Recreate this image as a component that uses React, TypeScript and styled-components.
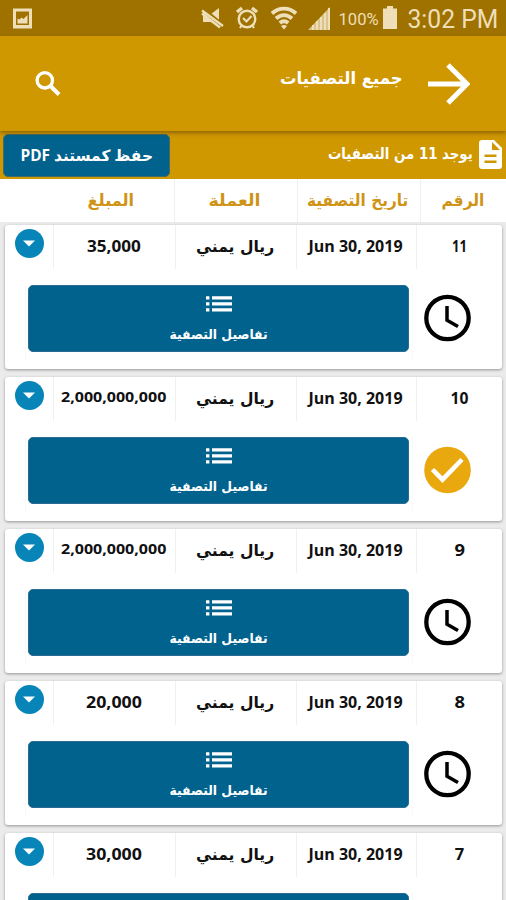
import React, { useLayoutEffect, useRef, useState } from "react";
import styled, { createGlobalStyle } from "styled-components";

const GlobalStyle = createGlobalStyle`
  html, body { margin: 0; padding: 0; background: #ebebeb; }
  body { overflow: hidden; }
  * { box-sizing: border-box; }
`;

const Screen = styled.div`
  width: 506px;
  height: 900px;
  overflow: hidden;
  background: #ebebeb;
  font-family: "Open Sans", "DejaVu Sans", sans-serif;
  display: flex;
  flex-direction: column;
`;

const FitBox = styled.span<{ $w: number; $dy: number }>`
  display: flex;
  justify-content: center;
  flex: none;
  width: ${(p) => p.$w}px;
  transform: translateY(${(p) => p.$dy}px);
`;

const FitText = styled.span<{ $size: number; $color: string; $weight: number; $family?: string }>`
  flex: none;
  white-space: nowrap;
  line-height: 1.2;
  font-size: ${(p) => p.$size}px;
  font-weight: ${(p) => p.$weight};
  color: ${(p) => p.$color};
  ${(p) => (p.$family ? `font-family: ${p.$family};` : "")}
`;

type LabelProps = {
  text: string;
  width: number;
  size: number;
  color?: string;
  weight?: number;
  family?: string;
  dy?: number;
  rtl?: boolean;
};

const ARABIC = '"DejaVu Sans", sans-serif';

/* One line of text condensed or widened to a fixed measure. */
function Label({ text, width, size, color = "#111", weight = 700, family, dy = 0, rtl }: LabelProps) {
  const ref = useRef<HTMLSpanElement>(null);
  const [scale, setScale] = useState(1);
  useLayoutEffect(() => {
    if (ref.current) setScale(width / ref.current.offsetWidth);
  }, [width, text]);
  return (
    <FitBox $w={width} $dy={dy}>
      <FitText
        ref={ref}
        dir={rtl ? "rtl" : "ltr"}
        $size={size}
        $color={color}
        $weight={weight}
        $family={family ?? (rtl ? ARABIC : undefined)}
        style={{ transform: `scaleX(${scale})` }}
      >
        {text}
      </FitText>
    </FitBox>
  );
}

const StatusBar = styled.div`
  height: 36px;
  flex: none;
  background: #9f7200;
  display: flex;
  align-items: center;
  padding: 0 8px 0 12px;
`;
const Spacer = styled.div`
  flex: 1;
`;
const Glyph = styled.svg<{ $ml?: number; $dy?: number }>`
  display: block;
  flex: none;
  margin-left: ${(p) => p.$ml ?? 0}px;
  margin-top: ${(p) => p.$dy ?? 0}px;
`;
const Gap = styled.span<{ $w: number }>`
  flex: none;
  width: ${(p) => p.$w}px;
`;

const AppBar = styled.header`
  height: 95px;
  flex: none;
  background: #cf9700;
  display: flex;
  align-items: center;
  padding: 0 36px 0 34px;
  box-shadow: 0 2px 4px rgba(90, 60, 0, 0.55);
  z-index: 1;
`;

const SummaryBar = styled.div`
  height: 48px;
  flex: none;
  background: #cf9700;
  display: flex;
  align-items: center;
  padding: 0 4px 0 3px;
`;

const PdfButton = styled.button`
  width: 167px;
  height: 43px;
  border: 1px solid #3f6d6a;
  border-radius: 5px;
  background: #00628d;
  display: flex;
  align-items: center;
  justify-content: center;
  padding: 0;
`;

const HeaderRow = styled.div`
  height: 43px;
  flex: none;
  background: #fff;
  display: grid;
  grid-template-columns: 48px 126px 123px 123px 86px;
`;
const Cell = styled.div<{ $line?: boolean; $pr?: number }>`
  display: flex;
  align-items: center;
  justify-content: center;
  padding-right: ${(p) => p.$pr ?? 0}px;
  border-left: 1px solid ${(p) => (p.$line ? "#f0f0f0" : "transparent")};
`;

const List = styled.main`
  padding: 3px 4px 0 5px;
  display: flex;
  flex-direction: column;
  gap: 8px;
`;
const Card = styled.section`
  height: 144px;
  flex: none;
  background: #fff;
  border-radius: 3px;
  box-shadow: 0 1px 3px rgba(0, 0, 0, 0.38);
`;
const CardRow = styled.div`
  height: 44px;
  display: grid;
  grid-template-columns: 48px 122px 121px 120px 86px;
`;
const CardBody = styled.div`
  height: 100px;
  display: flex;
  padding: 16px 0 0 20px;
`;
const ButtonSlot = styled.div`
  flex: none;
  width: 388px;
  height: 75px;
  padding: 0 4px 0 2px;
  border: solid #f8f8f8;
  border-width: 0 1px;
`;
const DetailsButton = styled.button`
  width: 381px;
  height: 67px;
  border: 1px solid #2b6a93;
  border-radius: 5px;
  background: #00628d;
  display: flex;
  flex-direction: column;
  align-items: center;
  padding: 10px 0 0;
`;
const Toggle = styled.div`
  width: 29px;
  height: 29px;
  border-radius: 50%;
  background: #0785b8;
  margin: -7px 0 0 -1px;
  display: flex;
  align-items: center;
  justify-content: center;
`;

function StatusIcons() {
  const c = "#eedfb9";
  return (
    <>
      <Glyph width="22" height="22" viewBox="0 0 22 22" $dy={1}>
        <path fill={c} fillRule="evenodd" d="M1 .5h19v20H1zM4 3.500v13.500h13V3.500z" />
        <path fill={c} d="M5.500 15.500v-5l2 1 2-2 2 1.500 4-4v8.500z" />
      </Glyph>
      <Spacer />
      <Glyph width="24" height="22" viewBox="0 0 24 22" $dy={2}>
        <path fill={c} d="M3 6h8l8-6v19l-8-5H3z" />
        <path stroke="#9f7200" strokeWidth="6.500" d="M2 2l21 17" />
        <path stroke={c} strokeWidth="2.300" d="M2 2.500l21 15.500M2 5.500l18 14" />
      </Glyph>
      <Glyph width="24" height="24" viewBox="0 0 24 24" $ml={11} $dy={-1}>
        <circle cx="12" cy="13" r="8.300" fill="none" stroke={c} strokeWidth="2.400" />
        <path d="M2 6l5-4M22 6l-5-4" stroke={c} strokeWidth="3.400" />
        <path d="M8 12l3.500 3.500 5-5.500M5 22l2-3M19 22l-2-3" fill="none" stroke={c} strokeWidth="2.200" />
      </Glyph>
      <Glyph width="28" height="24" viewBox="0 0 28 24" $ml={11} $dy={-1}>
        <g fill="none" stroke={c} strokeWidth="3.900">
          <path d="M2 7.500C9 1 19 1 26 7.500" />
          <path d="M6 12.500c5-4.500 11-4.500 16 0" />
          <path d="M9.800 17c2.800-2.300 5.600-2.300 8.400 0" />
        </g>
        <path fill={c} d="M11 20c2-1.500 4-1.500 6 0L14 23.500z" />
      </Glyph>
      <Glyph width="24" height="24" viewBox="0 0 24 24" $ml={9} $dy={0}>
        <path fill={c} opacity=".75" d="M1 24L23 1v23z" />
        <path stroke={c} strokeWidth="2" d="M6 24v-5M10 24v-9M14 24v-13M18 24V7M22 24V2" />
      </Glyph>
      <Gap $w={8} />
      <Label text="100%" width={40} size={17} weight={400} color={c} family="Roboto, sans-serif" dy={1} />
      <Glyph width="14" height="23" viewBox="0 0 14 23" $ml={4} $dy={-1}>
        <path fill={c} d="M4 0h6v2.500h4V23H0V2.500h4z" />
      </Glyph>
      <Gap $w={10} />
      <Label text="3:02 PM" width={91} size={26} weight={400} color={c} family="Roboto, sans-serif" dy={2} />
    </>
  );
}

const columns = [
  { text: "المبلغ", width: 47, pr: 1 },
  { text: "العملة", width: 52, pr: 3 },
  { text: "تاريخ التصفية", width: 101, pr: 2 },
  { text: "الرقم", width: 43, pr: 1 },
];

type Entry = {
  no: string;
  noWidth: number;
  amount: string;
  amountWidth: number;
  done?: boolean;
  peek?: boolean;
};
const entries: Entry[] = [
  { no: "11", noWidth: 15, amount: "35,000", amountWidth: 54 },
  { no: "10", noWidth: 18, amount: "2,000,000,000", amountWidth: 105, done: true },
  { no: "9", noWidth: 10, amount: "2,000,000,000", amountWidth: 105 },
  { no: "8", noWidth: 10, amount: "20,000", amountWidth: 56 },
  { no: "7", noWidth: 9, amount: "30,000", amountWidth: 56, peek: true },
];

/* A peeking card has only the top edge of its button on screen, so its contents are left out. */
function EntryCard({ no, noWidth, amount, amountWidth, done, peek }: Entry) {
  const long = amount.length > 8;
  return (
    <Card>
      <CardRow>
        <Cell>
          <Toggle>
            <Glyph width="12" height="7" viewBox="0 0 12 7">
              <path fill="#fff" d="M0 .5h12L6 6.500z" />
            </Glyph>
          </Toggle>
        </Cell>
        <Cell $line $pr={2}>
          <Label text={amount} width={amountWidth} size={long ? 14.5 : 16.5} dy={long ? -2 : -1} />
        </Cell>
        <Cell $line $pr={2}>
          <Label text="ريال يمني" width={78} size={16} rtl dy={0} />
        </Cell>
        <Cell $line $pr={2}>
          <Label text="Jun 30, 2019" width={94} size={16.5} dy={-1} />
        </Cell>
        <Cell $line>
          <Label text={no} width={noWidth} size={16.5} dy={-1} />
        </Cell>
      </CardRow>
      <CardBody>
        <ButtonSlot>
          <DetailsButton>
            {!peek && (
              <>
                <Glyph width="26" height="16" viewBox="0 0 26 16">
                  <path
                    fill="#fff"
                    d="M0 .3h3.400v3.200H0zM6 .3h20v3.200H6zM0 6.300h3.400v3.200H0zM6 6.300h20v3.200H6zM0 12.300h3.400v3.200H0zM6 12.300h20v3.200H6z"
                  />
                </Glyph>
                <Label text="تفاصيل التصفية" width={98} size={13.5} color="#fff" rtl dy={14} />
              </>
            )}
          </DetailsButton>
        </ButtonSlot>
        <Glyph width="48" height="48" viewBox="0 0 48 48" $ml={10} $dy={9}>
          {done ? (
            <>
              <circle cx="24.500" cy="24" r="23.300" fill="#e9a80e" />
              <path d="M9.500 23.500l10 10.200L39 13.500" fill="none" stroke="#fff" strokeWidth="4.600" />
            </>
          ) : (
            <>
              <circle cx="24.500" cy="24" r="21.200" fill="none" stroke="#000" strokeWidth="4.300" />
              <path d="M24 12v14.200L35 32.500" fill="none" stroke="#000" strokeWidth="3.500" />
            </>
          )}
        </Glyph>
      </CardBody>
    </Card>
  );
}

export default function App() {
  return (
    <>
      <GlobalStyle />
      <Screen>
        <StatusBar>
          <StatusIcons />
        </StatusBar>
        <AppBar>
          <Glyph width="28" height="28" viewBox="0 0 28 28">
            <circle cx="10.800" cy="10.300" r="7.700" fill="none" stroke="#fff" strokeWidth="3.300" />
            <path d="M16.500 16l8.500 8.500" stroke="#fff" strokeWidth="4" />
          </Glyph>
          <Spacer />
          <Label text="جميع التصفيات" width={123} size={17} color="#fff" rtl dy={-5} />
          <Glyph width="42" height="42" viewBox="0 0 42 42" $ml={25}>
            <path d="M0 21h38M20 2l19 19-19 19" fill="none" stroke="#fff" strokeWidth="5" />
          </Glyph>
        </AppBar>
        <SummaryBar>
          <PdfButton>
            <Label
              text="حفظ كمستند PDF"
              width={132}
              size={15.5}
              color="#fff"
              rtl
              family={'"Open Sans", "DejaVu Sans", sans-serif'}
            />
          </PdfButton>
          <Spacer />
          <Label text="يوجد 11 من التصفيات" width={145} size={15.5} color="#fff" rtl dy={-1} />
          <Glyph width="23" height="29" viewBox="0 0 23 29" $ml={6} $dy={-1}>
            <path
              fill="#fff"
              fillRule="evenodd"
              d="M3 0h12l8 8v18a3 3 0 0 1-3 3H3a3 3 0 0 1-3-3V3a3 3 0 0 1 3-3zM13 2v8h8zM5.500 14.500v2.500h12v-2.500zM5.500 20.500V23h12v-2.500z"
            />
          </Glyph>
        </SummaryBar>
        <HeaderRow>
          <Cell />
          {columns.map((c, i) => (
            <Cell key={c.text} $line={i > 0} $pr={c.pr}>
              <Label text={c.text} width={c.width} size={16.5} color="#cf9416" rtl dy={0} />
            </Cell>
          ))}
        </HeaderRow>
        <List>
          {entries.map((e) => (
            <EntryCard key={e.no} {...e} />
          ))}
        </List>
      </Screen>
    </>
  );
}
